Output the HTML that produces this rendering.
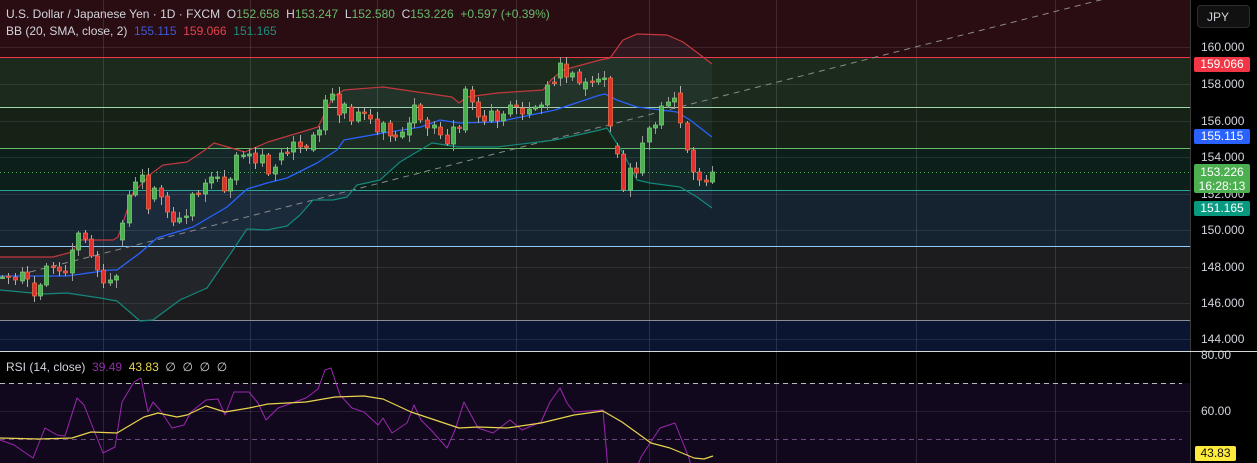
<!DOCTYPE html>
<html><head><meta charset="utf-8">
<style>
html,body{margin:0;padding:0;background:#000;}
#wrap{position:relative;width:1257px;height:463px;overflow:hidden;background:#000;font-family:"Liberation Sans",sans-serif;}
svg{position:absolute;left:0;top:0;}
.hdr{position:absolute;left:6px;font-size:12px;color:#d1d4dc;white-space:nowrap;}
.g{color:#66bb6a}
.lab{position:absolute;left:1201px;font-size:12px;color:#d1d4dc;}
.badge{position:absolute;left:1194px;width:56px;height:15px;border-radius:2px;color:#fff;font-size:12px;text-align:center;line-height:15px;}
</style></head><body>
<div id="wrap">
<svg id="s" width="1257" height="463" xmlns="http://www.w3.org/2000/svg"></svg>
<div class="hdr" style="top:7px">U.S. Dollar / Japanese Yen · 1D · FXCM&nbsp; O<span class="g">152.658</span>&nbsp; H<span class="g">153.247</span>&nbsp; L<span class="g">152.580</span>&nbsp; C<span class="g">153.226</span>&nbsp; <span class="g">+0.597 (+0.39%)</span></div>
<div class="hdr" style="top:24px">BB (20, SMA, close, 2)&nbsp; <span style="color:#3c5bd6">155.115</span>&nbsp; <span style="color:#e0434f">159.066</span>&nbsp; <span style="color:#1e8f7e">151.165</span></div>
<div class="hdr" style="top:360px">RSI (14, close)&nbsp; <span style="color:#8e2fa8">39.49</span>&nbsp; <span style="color:#e8d44d">43.83</span>&nbsp; ∅&nbsp; ∅&nbsp; ∅&nbsp; ∅</div>

<div style="position:absolute;left:1197px;top:5px;width:53px;height:23px;border:1px solid #2e2e2e;border-radius:4px;background:#111;color:#d1d4dc;font-size:12px;line-height:23px;box-sizing:border-box;padding-left:9px;">JPY</div>
<div class="lab" style="top:40px">160.000</div>
<div class="lab" style="top:77px">158.000</div>
<div class="lab" style="top:114px">156.000</div>
<div class="lab" style="top:150px">154.000</div>
<div class="lab" style="top:187px">152.000</div>
<div class="lab" style="top:223px">150.000</div>
<div class="lab" style="top:260px">148.000</div>
<div class="lab" style="top:296px">146.000</div>
<div class="lab" style="top:332px">144.000</div>
<div class="lab" style="top:348px">80.00</div>
<div class="lab" style="top:404px">60.00</div>
<div class="badge" style="top:57px;background:#f23645">159.066</div>
<div class="badge" style="top:129px;background:#2962ff">155.115</div>
<div class="badge" style="top:164px;height:29px;background:#4caf50;line-height:14px;padding-top:1px;box-sizing:border-box">153.226<br>16:28:13</div>
<div class="badge" style="top:201px;background:#089981">151.165</div>
<div class="badge" style="top:446px;left:1195px;width:41px;background:#ffeb3b;color:#111">43.83</div>
</div>
<script>
const s=document.getElementById('s');let h='';
const W=1190;
function r(x,y,w,hh,c){h+=`<rect x="${x}" y="${y}" width="${w}" height="${hh}" fill="${c}"/>`;}
function l(x1,y1,x2,y2,c,extra=''){h+=`<line x1="${x1}" y1="${y1}" x2="${x2}" y2="${y2}" stroke="${c}" stroke-width="1" ${extra}/>`;}
function pl(pts,c,w=1.2){h+=`<polyline fill="none" stroke="${c}" stroke-width="${w}" stroke-linejoin="round" points="${pts.map(p=>p.join(',')).join(' ')}"/>`;}
r(0,0,W,57,'#2a0d12');r(0,57,W,50,'#1c2a1c');r(0,107,W,41,'#162216');r(0,148,W,42,'#0d1f1b');
r(0,190,W,56,'#15222f');r(0,246,W,74,'#1c1c1e');r(0,320,W,31,'#0a1631');
r(0,383,W,80,'#12081d');
[47,84,121,157,194,230,267,303,339,411].forEach(y=>l(0,y+.5,W,y+.5,'rgba(255,255,255,0.09)'));
[103,250,377,516,649,776,916,1055].forEach(x=>l(x+.5,0,x+.5,463,'rgba(255,255,255,0.12)'));
l(0,57.5,W,57.5,'#f23645');l(0,107.5,W,107.5,'#a5d6a7');l(0,148.5,W,148.5,'#66bb6a');
l(0,190.5,W,190.5,'#26a69a');l(0,246.5,W,246.5,'#90caf9');l(0,320.5,W,320.5,'#8a8d96');
l(0,172.5,W,172.5,'#4caf50','stroke-dasharray="1 3"');
l(0,383.5,W-8,383.5,'#bbb','stroke-dasharray="5 4"');
l(0,439.5,W-8,439.5,'#6a4a7a','stroke-dasharray="5 4"');
const up=[[0,257],[53,257],[72,252],[80,240],[113,240],[118,237],[133,193],[152,173],[163,165],[187,162],[205,150],[214,143],[245,152],[268,142],[318,127],[333,97],[344,90],[383,87],[390,88],[452,97],[459,103],[467,97],[497,93],[543,90],[551,80],[563,70],[600,60],[610,58],[623,40],[637,34],[667,35],[683,42],[703,57],[712,64]];
const mid=[[0,276],[67,276],[110,270],[117,270],[140,253],[157,238],[193,227],[227,207],[247,189],[267,183],[287,178],[317,163],[337,150],[344,140],[383,133],[421,127],[440,120],[459,123],[497,122],[555,110],[600,95],[605,94],[617,100],[637,107],[677,112],[690,120],[712,137]];
const lo=[[0,290],[43,294],[67,293],[100,298],[117,301],[140,321],[153,320],[180,300],[207,288],[233,250],[247,229],[267,230],[287,226],[300,215],[313,200],[333,200],[347,197],[357,185],[380,180],[400,162],[432,143],[459,147],[497,147],[555,140],[600,130],[607,128],[623,153],[637,180],[650,183],[680,187],[697,197],[712,208]];
h+=`<polygon fill="rgba(120,170,220,0.07)" points="${up.concat(lo.slice().reverse()).map(p=>p.join(',')).join(' ')}"/>`;
l(30,272,1120,-5,'#8a8a8a','stroke-dasharray="6 5"');
pl(up,'#c2383f');pl(mid,'#2962ff',1.3);pl(lo,'#14887a');
const C=[[2,277,277],[8,276,277],[15,277,280],[22,281,272],[27,272,279],[34,283,296],[40,296,285],[46,285,266],[53,266,267],[59,267,271],[65,271,273],[72,273,250],[78,250,233],[85,233,239],[91,239,256],[97,256,270],[103,270,283],[110,283,280],[116,280,276],
[122,240,223],[129,223,195],[135,195,182],[142,182,175],[148,175,209],[154,199,188],[161,188,197],[167,196,212],[173,212,222],[179,222,218],[186,217,216],[192,216,194],[198,193,194],[205,194,183],[211,183,177],[217,178,177],[224,177,191],[230,191,179],[236,180,155],[243,156,155],[249,156,154],[255,153,163],[262,163,155],[268,155,174],[275,174,167],[281,160,153],[287,152,153],[293,152,142],[300,142,147],[306,146,147],[313,150,135],[319,135,130],
[325,130,100],[332,100,94],[339,94,115],[344,113,104],[351,107,121],[358,121,112],[364,112,113],[370,115,119],[377,119,132],[383,132,123],[390,123,136],[395,135,137],[402,137,132],[409,135,123],[414,123,105],[420,105,120],[427,120,128],[434,128,125],[440,127,135],[447,135,144],[453,144,127],[459,127,128],[465,130,89],[472,90,102],[478,102,117],[484,116,121],[491,121,111],[497,111,121],[503,121,114],[510,114,105],[516,105,106],[522,108,114],[529,114,109],[535,109,107],[541,107,105],[547,105,85],[554,82,83],
[560,78,63],[566,64,77],[572,77,73],[579,72,83],[585,89,82],[592,81,82],[598,82,79],[604,79,78],[610,78,126],[617,146,154],[623,154,190],[630,190,168],[636,168,173],[642,173,143],[649,142,128],[655,128,125],[661,125,106],[668,106,102],[674,102,98],[680,93,123],[687,123,150],[693,150,172],[699,172,180],[706,180,182],[712,182,172]];
C.forEach((c,i)=>{const [x,o,cl]=c;const t=Math.min(o,cl),b=Math.max(o,cl);const up=cl<=o;
 const w1=2+(i*7)%6,w2=2+(i*5)%7;
 const col=up?'#4caf50':'#e0312f',st=up?'#7fd67f':'#f7744a';
 h+=`<line x1="${x+.5}" y1="${t-w1}" x2="${x+.5}" y2="${b+w2}" stroke="${up?'#9a9a9a':'#b0b0b0'}" stroke-width="1"/>`;
 h+=`<rect x="${x-1.5}" y="${t}" width="4" height="${Math.max(b-t,1.5)}" fill="${col}" stroke="${st}" stroke-width="0.7"/>`;});
const rsi=[[0,440],[14,445],[33,458],[45,428],[57,435],[65,436],[77,398],[84,405],[103,453],[115,447],[122,402],[134,382],[141,378],[148,412],[153,402],[160,410],[172,428],[184,425],[191,412],[206,400],[218,399],[225,415],[234,392],[249,392],[258,403],[266,420],[278,408],[306,398],[318,389],[325,370],[331,368],[340,395],[352,408],[364,412],[378,425],[383,418],[392,433],[407,423],[414,405],[421,420],[431,430],[447,448],[455,430],[464,402],[478,428],[493,433],[510,420],[522,430],[541,422],[550,402],[560,388],[567,403],[574,412],[603,410],[608,470],[636,470],[641,457],[660,428],[675,423],[689,458],[692,470]];
const ma=[[0,438],[38,439],[72,438],[91,432],[117,433],[144,417],[158,413],[177,417],[187,415],[206,406],[225,412],[249,408],[268,404],[306,402],[335,397],[364,396],[383,399],[411,412],[459,428],[478,427],[507,428],[541,423],[574,415],[603,411],[622,422],[651,443],[670,448],[694,458],[704,459],[713,456]];
pl(rsi,'#9c27b0',1);pl(ma,'#e8d44d',1.2);
r(W,0,1257-W,463,'#000');l(W+.5,0,W+.5,463,'#3a3a3a');
l(0,351.5,1257,351.5,'#d8d8d8');
s.innerHTML=h;
</script>
</body></html>
